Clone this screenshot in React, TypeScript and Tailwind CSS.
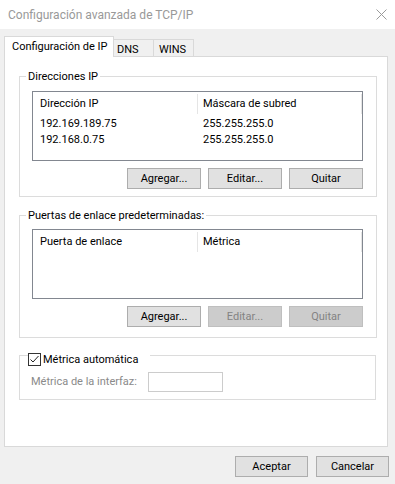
const font = "font-['Segoe_UI',Roboto,sans-serif]";

const Btn = ({ label, disabled = false, w = "w-[74px]" }: { label: string; disabled?: boolean; w?: string }) => (
  <button
    type="button"
    className={
      disabled
        ? `${w} h-[21px] bg-[#cccccc] border border-[#bfbfbf] text-[#838383] text-[11px] leading-none`
        : `${w} h-[21px] bg-[#e1e1e1] border border-[#adadad] text-black text-[11px] leading-none`
    }
  >
    {label}
  </button>
);

const ListHeader = ({ first, second }: { first: string; second: string }) => (
  <div className="flex items-center h-[24px]">
    <div className="w-[164px] pl-[7px]">{first}</div>
    <div className="w-px h-[20px] bg-[#e5e5e5]" />
    <div className="w-[163px] pl-[5px]">{second}</div>
    <div className="w-px h-[20px] bg-[#e5e5e5]" />
  </div>
);

const App = () => {
  const rows = [
    { ip: "192.169.189.75", mask: "255.255.255.0" },
    { ip: "192.168.0.75", mask: "255.255.255.0" },
  ];

  return (
    <div className={`w-[395px] h-[484px] bg-[#f0f0f0] flex flex-col text-[11px] text-black ${font}`}>
      {/* title bar */}
      <div className="h-[29px] bg-white flex items-center justify-between pl-[8px] pr-[8px]">
        <span className="text-[#999999] text-[12px]">Configuración avanzada de TCP/IP</span>
        <svg width="11" height="11" viewBox="0 0 11 11">
          <path d="M0.5 0.5 L10.5 10.5 M10.5 0.5 L0.5 10.5" stroke="#9a9a9a" strokeWidth="1" />
        </svg>
      </div>

      {/* tabs */}
      <div className="flex items-end pl-[4px] pt-[7px]">
        <div className="relative z-10 -mb-px h-[21px] w-[110px] bg-white border border-b-0 border-[#d9d9d9] pl-[7px] pt-[2px] leading-[16px] whitespace-nowrap">
          Configuración de IP
        </div>
        <div className="h-[17px] w-[40px] border-t border-r border-[#d9d9d9] pl-[3px] leading-[17px] pt-px">DNS</div>
        <div className="h-[17px] w-[40px] border-t border-r border-[#d9d9d9] pl-[5px] leading-[17px] pt-px">WINS</div>
      </div>

      {/* panel */}
      <div className="ml-[4px] w-[384px] h-[391px] bg-white border border-[#d9d9d9] pl-[14px]">
        {/* Direcciones IP */}
        <fieldset className="mt-[12px] w-[357px] border border-[#dcdcdc]">
          <legend className="ml-[6px] px-[2px] leading-[15px]">Direcciones IP</legend>
          <div className="pl-[12px] pr-[13px] pb-[7px]">
            <div className="mt-[7px] h-[70px] border border-[#828790] bg-white">
              <ListHeader first="Dirección IP" second="Máscara de subred" />
              {rows.map((r) => (
                <div key={r.ip} className="flex h-[16px] leading-[16px]">
                  <div className="w-[165px] pl-[7px]">{r.ip}</div>
                  <div className="pl-[5px]">{r.mask}</div>
                </div>
              ))}
            </div>
            <div className="mt-[7px] flex justify-end gap-[7px]">
              <Btn label="Agregar..." />
              <Btn label="Editar..." />
              <Btn label="Quitar" />
            </div>
          </div>
        </fieldset>

        {/* Puertas de enlace */}
        <fieldset className="mt-[11px] w-[357px] border border-[#dcdcdc]">
          <legend className="ml-[6px] px-[2px] leading-[15px]">Puertas de enlace predeterminadas:</legend>
          <div className="pl-[12px] pr-[13px] pb-[10px]">
            <div className="mt-[6px] h-[70px] border border-[#828790] bg-white">
              <ListHeader first="Puerta de enlace" second="Métrica" />
            </div>
            <div className="mt-[7px] flex justify-end gap-[7px]">
              <Btn label="Agregar..." />
              <Btn label="Editar..." disabled />
              <Btn label="Quitar" disabled />
            </div>
          </div>
        </fieldset>

        {/* Métrica automática */}
        <fieldset className="mt-[6px] w-[357px] border border-[#dcdcdc]">
          <legend className="ml-[8px] pr-[12px] pt-[8px] leading-[15px]">
            <span className="flex items-center gap-[2px]">
              <span className="w-[13px] h-[13px] border border-[#333333] bg-white flex items-center justify-center">
                <svg width="11" height="11" viewBox="0 0 11 11">
                  <path d="M1.5 5.5 L4 8 L9.5 2" stroke="#222222" strokeWidth="1" fill="none" />
                </svg>
              </span>
              <span>Métrica automática</span>
            </span>
          </legend>
          <div className="pl-[11px] pb-[7px] mt-[5px] flex items-center">
            <span className="w-[117px] text-[#8a8a8a]">Métrica de la interfaz:</span>
            <div className="w-[75px] h-[20px] border border-[#cccccc] bg-white" />
          </div>
        </fieldset>
      </div>

      {/* footer buttons */}
      <div className="mt-[9px] flex justify-end gap-[8px] pr-[6px]">
        <Btn label="Aceptar" w="w-[73px]" />
        <Btn label="Cancelar" w="w-[73px]" />
      </div>
    </div>
  );
};

export default App;
